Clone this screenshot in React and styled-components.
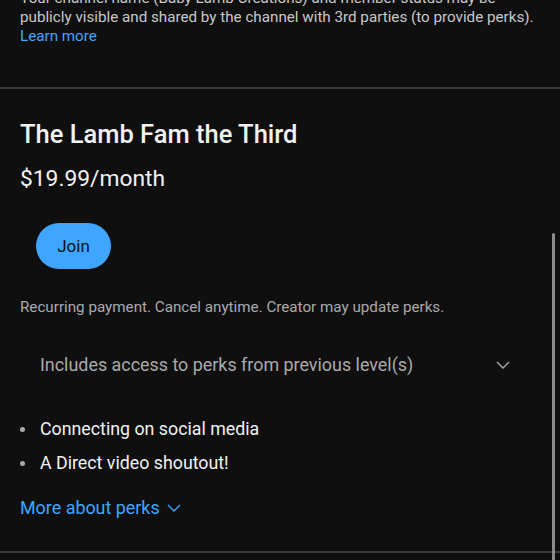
import React from 'react';
import styled, { createGlobalStyle } from 'styled-components';

const GlobalStyle = createGlobalStyle`
  html, body {
    margin: 0;
    padding: 0;
    background: #0f0f0f;
    overflow: hidden;
  }
  body {
    font-family: Roboto, "Liberation Sans", Arial, sans-serif;
    color: #f1f1f1;
  }
`;

const Page = styled.div`
  position: relative;
  width: 560px;
  height: 560px;
  overflow: hidden;
  background: #0f0f0f;
`;

const Notice = styled.section`
  margin-top: -11px;
  padding: 0 20px 41px;
  font-size: 15.2px;
  line-height: 19px;
  color: #c8c8c8;
  border-bottom: 2px solid #3a3a3a;
`;

const Link = styled.a`
  color: #3ea6ff;
  text-decoration: none;
  display: inline-flex;
  align-items: center;
  gap: ${p => (p.$gap ? `${p.$gap}px` : '0')};
`;

const Tier = styled.section`
  padding: 29px 20px 0;
  height: 464px;
  box-sizing: border-box;
  border-bottom: 2px solid #3a3a3a;
`;

const Title = styled.h2`
  margin: 0;
  font-size: 25.5px;
  line-height: 32px;
  font-weight: 500;
  color: #f1f1f1;
`;

const Price = styled.div`
  margin-top: 15px;
  font-size: 22.8px;
  line-height: 28px;
  color: #f1f1f1;
`;

const JoinButton = styled.button`
  margin: 30px 0 0 16px;
  width: 75px;
  height: 46px;
  border: none;
  border-radius: 23px;
  background: #3ea6ff;
  color: #0f0f0f;
  font-family: inherit;
  font-size: 17px;
  font-weight: 400;
`;

const Fine = styled.p`
  margin: 28px 0 0;
  font-size: 15.2px;
  line-height: 20px;
  color: #aaaaaa;
`;

const Expander = styled.div`
  margin-top: 36px;
  padding: 0 0 0 20px;
  width: 490px;
  box-sizing: border-box;
  display: flex;
  align-items: center;
  justify-content: space-between;
  font-size: 17.9px;
  line-height: 24px;
  color: #aaaaaa;
`;

const Perks = styled.ul`
  margin: 40px 0 0;
  padding: 0;
  list-style: none;
  display: flex;
  flex-direction: column;
  gap: 10px;
  font-size: 17.8px;
  line-height: 24px;
  color: #f1f1f1;

  li {
    display: flex;
    align-items: center;
  }
  li::before {
    content: '';
    width: 5px;
    height: 5px;
    border-radius: 50%;
    background: #aaaaaa;
    margin: 1px 15px 0 0;
  }
`;

const More = styled.div`
  margin-top: 21px;
  font-size: 17.9px;
  line-height: 24px;
`;

const Scrollbar = styled.div`
  position: absolute;
  right: 5px;
  top: 233px;
  width: 3px;
  height: 340px;
  border-radius: 2px;
  background: #8a8a8a;
`;

const Chevron = ({ color }) => (
  <svg width="14" height="8" viewBox="0 0 14 8" fill="none">
    <path d="M1 1l6 6 6-6" stroke={color} strokeWidth="1.4" />
  </svg>
);

export default function App() {
  return (
    <Page>
      <GlobalStyle />
      <Notice>
        Your channel name (Baby Lamb Creations) and member status may be
        <br />
        publicly visible and shared by the channel with 3rd parties (to provide perks).
        <br />
        <Link href="#">Learn more</Link>
      </Notice>
      <Tier>
        <Title>The Lamb Fam the Third</Title>
        <Price>$19.99/month</Price>
        <JoinButton>Join</JoinButton>
        <Fine>Recurring payment. Cancel anytime. Creator may update perks.</Fine>
        <Expander>
          <span>Includes access to perks from previous level(s)</span>
          <Chevron color="#aaaaaa" />
        </Expander>
        <Perks>
          <li>Connecting on social media</li>
          <li>A Direct video shoutout!</li>
        </Perks>
        <More>
          <Link href="#" $gap={7}>
            More about perks <Chevron color="#3ea6ff" />
          </Link>
        </More>
      </Tier>
      <Scrollbar />
    </Page>
  );
}
